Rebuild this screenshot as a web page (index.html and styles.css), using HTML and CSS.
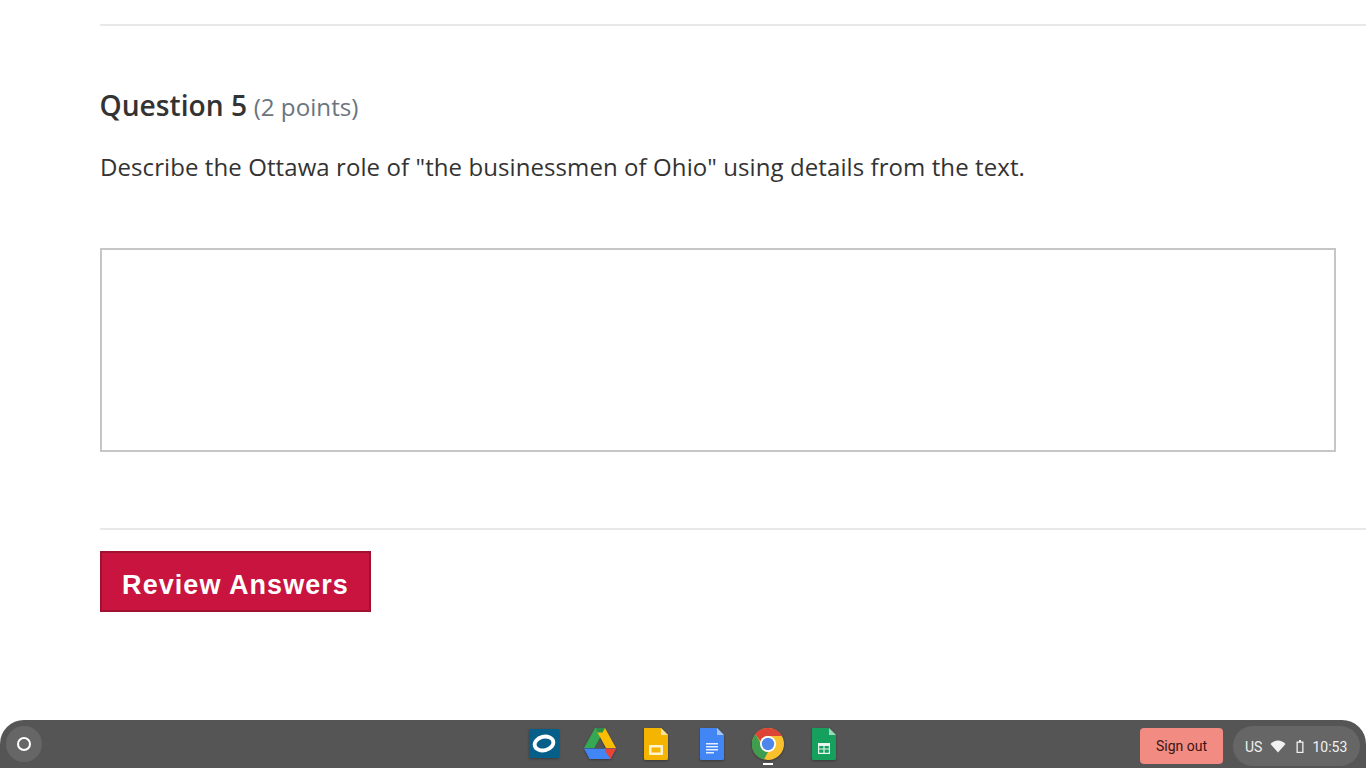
FILE: index.html
```html
<!DOCTYPE html>
<html lang="en">
<head>
<meta charset="utf-8">
<title>Question 5</title>
<link rel="stylesheet" href="styles.css">
</head>
<body>
<main class="page">
  <hr class="rule rule-top">
  <h2 class="question-title">Question 5<span class="points">(2 points)</span></h2>
  <p class="question-text">Describe the Ottawa role of "the businessmen of Ohio" using details from the text.</p>
  <div class="answer-box"></div>
  <hr class="rule rule-bottom">
  <button class="review-btn" type="button">Review Answers</button>
</main>
<footer class="shelf">
  <div class="launcher"><span class="launcher-ring"></span></div>
  <div class="apps">
    <div class="app">
      <svg width="32" height="32" viewBox="0 0 32 32"><rect x="1" y="1" width="30" height="29" rx="1" fill="#055f88"/><ellipse cx="16" cy="15.500" rx="9.500" ry="6.800" transform="rotate(-14 16 15.500)" fill="none" stroke="#fff" stroke-width="3.800"/></svg>
    </div>
    <div class="app">
      <svg width="32" height="32" viewBox="0 0 32 32"><path d="M11 0h10L16 10 10.500 20H0z" fill="#34a853"/><path d="M11 0h10l11 20H22z" fill="#fbbc04"/><path d="M5.500 31 0 20.500h32L26.500 31z" fill="#4285f4"/><path d="M22 20.500h10L26.500 31 21 23z" fill="#ea4335"/><path d="M11 0h10l-2.500 4.500h-5z" fill="#2a8f48"/><path d="M16 10.500 21 20.500H10.500z" fill="#555"/></svg>
    </div>
    <div class="app">
      <svg width="32" height="32" viewBox="0 0 32 32"><path d="M4 0h17l7 7v23.500a1.500 1.500 0 0 1-1.500 1.500h-21A1.500 1.500 0 0 1 4 30.500z" fill="#f4b400"/><path d="M21 0l7 7h-7z" fill="#fae29a"/><rect x="9" y="17" width="14" height="10" rx="1" fill="#fff3d0"/><rect x="11.500" y="19.500" width="9" height="5" fill="#f4b400"/></svg>
    </div>
    <div class="app">
      <svg width="32" height="32" viewBox="0 0 32 32"><path d="M4 0h17l7 7v23.500a1.500 1.500 0 0 1-1.500 1.500h-21A1.500 1.500 0 0 1 4 30.500z" fill="#4285f4"/><path d="M21 0l7 7h-7z" fill="#a9c6fa"/><path d="M10 15h12v1.500H10zM10 18h12v1.500H10zM10 21h12v1.500H10zM10 24h8v1.500h-8z" fill="#e3edfd"/></svg>
    </div>
    <div class="app app-active">
      <svg width="32" height="32" viewBox="0 0 32 32"><circle cx="16" cy="16" r="16" fill="#fbc02d"/><path d="M16 0a16 16 0 0 1 13.900 8H16a8 8 0 0 0-7.600 5.500L3.300 5.900A16 16 0 0 1 16 0z" fill="#db4437"/><path d="M3.300 5.900l6.700 11.800a8 8 0 0 0 6 6.300L12 31.500A16 16 0 0 1 3.300 5.900z" fill="#3f9d4f"/><circle cx="16" cy="16" r="8" fill="#fff"/><circle cx="16" cy="16" r="6.200" fill="#4f86ec"/></svg>
      <span class="active-dot"></span>
    </div>
    <div class="app">
      <svg width="32" height="32" viewBox="0 0 32 32"><path d="M4 0h17l7 7v23.500a1.500 1.500 0 0 1-1.500 1.500h-21A1.500 1.500 0 0 1 4 30.500z" fill="#16a05d"/><path d="M21 0l7 7h-7z" fill="#9fd8bc"/><path d="M10 15h12v11H10z" fill="#e8f5ee"/><path d="M11.200 18h4.200v2.400h-4.200zM16.600 18h4.200v2.400h-4.200zM11.200 21.500h4.200v3.300h-4.200zM16.600 21.500h4.200v3.300h-4.200z" fill="#16a05d"/></svg>
    </div>
  </div>
  <div class="tray">
    <button class="signout" type="button">Sign out</button>
    <div class="status">
      <span>US</span>
      <svg class="wifi" width="16" height="13" viewBox="0 0 16 13"><path d="M0.500 4C4.500-.8 11.500-.8 15.500 4L8 12.500z" fill="#f1f1f1"/></svg>
      <svg class="battery" width="8" height="13" viewBox="0 0 8 13"><path d="M3 0h2v1.500h2.500V13H.5V1.500H3z" fill="#f1f1f1"/><rect x="1.800" y="2.800" width="4.400" height="9" fill="#666"/></svg>
      <span>10:53</span>
    </div>
  </div>
</footer>
</body>
</html>
```
FILE: styles.css
```css
* { box-sizing: border-box; }
html, body { margin: 0; height: 768px; overflow: hidden; background: #fff; }
body { display: flex; flex-direction: column; }

.page { flex: 1; padding: 24px 0 0 100px; font-family: "Open Sans", sans-serif; color: #333; }
.rule { margin: 0; border: 0; height: 2px; background: #e8e8e8; }
.question-title { margin: 58px 0 0 -0.5px; font-size: 28.2px; line-height: 42px; font-weight: 600; color: #333; }
.points { margin-left: 6.500px; font-size: 24.2px; font-weight: 400; color: #6a7580; }
.question-text { margin: 21px 0 0; font-size: 24px; letter-spacing: 0.085px; line-height: 36px; }
.answer-box { margin: 63px 30px 0 0; height: 204px; border: 2px solid #c6c6c6; background: #fff; }
.rule-bottom { margin-top: 76px; }
.review-btn {
  display: block; margin-top: 21px; width: 271px; height: 61px; padding: 7px 0 0;
  background: #c8143f; border: 2px solid #a01030; color: #fff;
  font: 700 27px "Liberation Sans", sans-serif; letter-spacing: 1.05px;
}

.shelf {
  height: 48px; flex: none; position: relative; display: flex; align-items: center; justify-content: space-between;
  background: #555; border-radius: 24px 24px 0 0; padding: 0 6px;
  font-family: Roboto, sans-serif;
}
.launcher { width: 36px; height: 36px; border-radius: 50%; background: #666; display: flex; align-items: center; justify-content: center; }
.launcher-ring { width: 14px; height: 14px; border-radius: 50%; border: 2px solid #fff; }
.apps { position: absolute; left: 516px; top: 0; height: 48px; display: flex; }
.app { width: 56px; height: 48px; display: flex; align-items: center; justify-content: center; position: relative; }
.app svg { filter: drop-shadow(0 1px 1px rgba(0, 0, 0, .35)) blur(.3px); }
.active-dot { position: absolute; left: 23px; bottom: 3px; width: 10px; height: 2px; background: #fff; }
.tray { display: flex; align-items: center; gap: 10px; margin-left: auto; padding-top: 4px; }
.signout {
  width: 83px; height: 36px; border: 0; border-radius: 4px; background: #f28b82; color: #3c1412;
  font: 400 14px Roboto, sans-serif; padding: 0;
}
.status {
  width: 127px; height: 40px; border-radius: 20px; background: #666; color: #f1f1f1;
  display: flex; align-items: center; padding: 1px 0 0 12px; font-size: 14px;
}
.wifi { margin-left: 8px; }
.battery { margin-left: 10px; }
.status span:last-child { margin-left: 8px; }
```
